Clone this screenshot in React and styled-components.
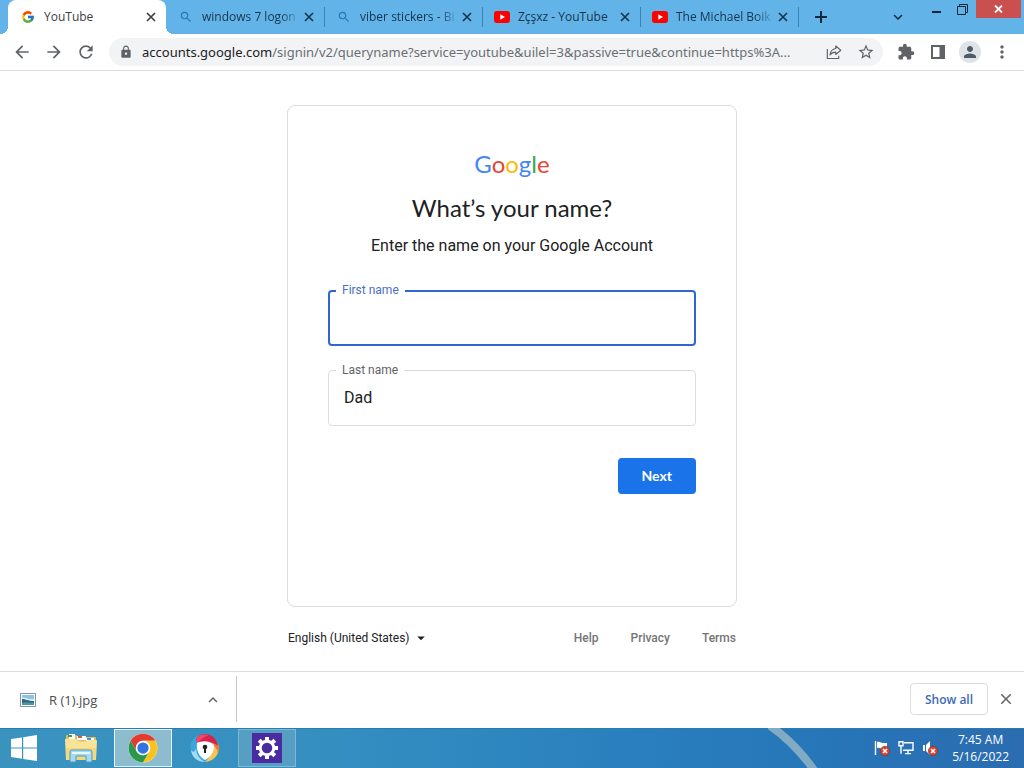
import React from 'react';
import styled, { createGlobalStyle, css } from 'styled-components';
import { FcGoogle } from 'react-icons/fc';
import {
  MdArrowBack,
  MdArrowDropDown,
  MdArrowForward,
  MdClose,
  MdExpandLess,
  MdExpandMore,
  MdExtension,
  MdLock,
  MdMoreVert,
  MdPerson,
  MdRefresh,
  MdSearch,
  MdStarBorder,
} from 'react-icons/md';

const uiFont = '"Segoe UI", "Open Sans", "Noto Sans", sans-serif';
const pageFont = 'Roboto, "Liberation Sans", sans-serif';
const headFont = '"Google Sans", Lato, sans-serif';

const GlobalStyle = createGlobalStyle`
  * {
    box-sizing: border-box;
  }
  body {
    margin: 0;
    background: #fff;
    font-family: ${uiFont};
  }
  button {
    padding: 0;
    border: 0;
    background: none;
    font: inherit;
    color: inherit;
  }
`;

const Desktop = styled.div`
  display: flex;
  flex-direction: column;
  min-height: 100vh;
`;

/* tab strip */
const TabStrip = styled.header`
  display: flex;
  height: 34px;
  padding-left: 8px;
  background: #62b4e8;
  color: #17344d;
`;
const divider = css`
  border-left: 1px solid;
  border-image: linear-gradient(transparent 8px, #3b83b3 8px, #3b83b3 26px, transparent 26px) 1;
`;
const Tab = styled.div`
  position: relative;
  display: flex;
  align-items: center;
  flex: 0 1 158px;
  min-width: 0;
  padding: 0 7px 0 11px;
  ${divider}

  ${({ $active }) => $active && css`
    padding-left: 12px;
    border: 0;
    background: #fff;
    border-radius: 8px 8px 0 0;
    color: #3c4043;

    &::before,
    &::after {
      content: '';
      position: absolute;
      bottom: 0;
      width: 8px;
      height: 8px;
    }
    &::before {
      left: -8px;
      background: radial-gradient(circle at 0 0, transparent 8px, #fff 8px);
    }
    &::after {
      right: -8px;
      background: radial-gradient(circle at 100% 0, transparent 8px, #fff 8px);
    }
    & + div {
      padding-left: 12px;
      border: 0;
    }
  `}
`;
const TabIcon = styled.span`
  display: flex;
  justify-content: center;
  flex: 0 0 16px;
  margin-right: 8px;
`;
const TabTitle = styled.span`
  flex: 1;
  overflow: hidden;
  white-space: nowrap;
  font-size: 12px;
  line-height: 20px;
  ${({ $fade }) => $fade && 'mask-image: linear-gradient(to left, transparent, #000 20px);'}
`;
const TabClose = styled.button`
  display: flex;
  align-items: center;
  justify-content: center;
  flex: 0 0 16px;
  height: 16px;
`;
const NewTab = styled.button`
  display: flex;
  align-items: center;
  justify-content: center;
  width: 44px;
  ${divider}
`;
const WindowButtons = styled.div`
  display: flex;
  align-items: flex-start;
  margin-left: auto;
  padding-right: 3px;
`;
const TabSearch = styled.button`
  display: flex;
  align-items: center;
  justify-content: center;
  width: 32px;
  height: 34px;
  margin-right: 10px;
  color: #12283a;
`;
const WindowButton = styled.button`
  display: flex;
  align-items: center;
  justify-content: center;
  width: ${({ $danger }) => ($danger ? 45 : 26)}px;
  height: 18px;
  padding-right: ${({ $danger }) => ($danger ? 0 : 2)}px;
  background: ${({ $danger }) => ($danger ? '#c9504f' : 'transparent')};
`;

/* toolbar */
const Toolbar = styled.nav`
  display: flex;
  align-items: center;
  height: 37px;
  padding: 0 6px;
  border-bottom: 1px solid #dadce0;
  background: #fff;
`;
const ToolButton = styled.button`
  display: flex;
  align-items: center;
  justify-content: center;
  flex: 0 0 32px;
  height: 28px;
  color: #5f6368;
`;
const Omnibox = styled.div`
  display: flex;
  align-items: center;
  flex: 1;
  min-width: 0;
  height: 28px;
  margin: 0 7px;
  padding: 0 1px 0 10px;
  border-radius: 14px;
  background: #f1f3f4;
  color: #5f6368;
`;
const Address = styled.div`
  flex: 1;
  min-width: 0;
  margin-left: 9px;
  overflow: hidden;
  white-space: nowrap;
  text-overflow: ellipsis;
  font-family: "Noto Sans", sans-serif;
  font-size: 13px;
  line-height: 20px;
  color: #6b6f74;

  b {
    font-weight: 400;
    color: #202124;
  }
`;
const Avatar = styled.span`
  display: flex;
  align-items: center;
  justify-content: center;
  width: 22px;
  height: 22px;
  border-radius: 50%;
  background: #dfe3e8;
  color: #4d5a68;
`;

/* sign in page */
const Page = styled.main`
  display: flex;
  flex-direction: column;
  align-items: center;
  flex: 1;
  padding: 34px 16px 24px;
  font-family: ${pageFont};
  color: #202124;
`;
const Card = styled.form`
  display: flex;
  flex-direction: column;
  align-items: center;
  width: 100%;
  max-width: 450px;
  min-height: 502px;
  padding: 48px 40px;
  border: 1px solid #dadce0;
  border-radius: 8px;
`;
const Wordmark = styled.div`
  margin-bottom: 4px;
  font-family: ${headFont};
  font-size: 24px;
  line-height: 20px;
`;
const Letter = styled.span`
  color: ${({ $color }) => $color};
`;
const Title = styled.h1`
  margin: 14px 0 0;
  font-family: ${headFont};
  font-size: 24px;
  font-weight: 400;
  line-height: 32px;
`;
const Subtitle = styled.p`
  margin: 10px 0 32px;
  font-size: 16px;
  line-height: 24px;
`;
const Field = styled.div`
  position: relative;
  width: 100%;
  margin-bottom: 24px;

  label {
    position: absolute;
    top: -8px;
    left: 8px;
    padding: 0 6px;
    background: #fff;
    font-size: 12px;
    line-height: 16px;
    color: ${({ $active }) => ($active ? '#4a70c4' : '#5f6368')};
  }
  input {
    display: block;
    width: 100%;
    height: 56px;
    padding: 0 15px 2px;
    border: ${({ $active }) => ($active ? '2px solid #2f66cf' : '1px solid #dadce0')};
    border-radius: 4px;
    background: transparent;
    font: 16px ${pageFont};
    color: #202124;
    outline: none;
  }
`;
const NextButton = styled.button`
  align-self: flex-end;
  height: 36px;
  margin-top: 8px;
  padding: 0 24px 2px;
  border-radius: 4px;
  background: #1a73e8;
  color: #fff;
  font-family: ${headFont};
  font-size: 14px;
  font-weight: 700;
`;
const PageFooter = styled.footer`
  display: flex;
  align-items: center;
  justify-content: space-between;
  width: 100%;
  max-width: 448px;
  padding-top: 22px;
  font-size: 12px;
  line-height: 16px;
`;
const Language = styled.div`
  display: flex;
  align-items: center;
  gap: 2px;

  select {
    appearance: none;
    padding: 0;
    border: 0;
    background: none;
    font: inherit;
    color: #202124;
  }
`;
const FooterLinks = styled.div`
  display: flex;
  gap: 32px;

  a {
    color: #757575;
    font-weight: 500;
    text-decoration: none;
  }
`;

/* downloads */
const DownloadBar = styled.section`
  display: flex;
  align-items: center;
  height: 57px;
  padding: 0 8px 2px 0;
  border-top: 1px solid #dadce0;
  background: #fff;
`;
const DownloadItem = styled.div`
  display: flex;
  align-items: center;
  width: 237px;
  height: 46px;
  padding: 2px 13px 0 20px;
  border-right: 1px solid #c4c7cb;
  color: #4a4d51;
  font-size: 13px;
`;
const DownloadName = styled.span`
  flex: 1;
  margin-left: 13px;
`;
const ShowAll = styled.button`
  width: 78px;
  height: 32px;
  margin: 0 8px 0 auto;
  border: 1px solid #dadce0;
  border-radius: 4px;
  color: #3d6ab8;
  font-size: 12px;
  font-weight: 600;
`;
const CloseBar = styled.button`
  display: flex;
  justify-content: center;
  width: 20px;
  color: #5f6368;
`;

/* taskbar */
const Taskbar = styled.footer`
  position: relative;
  display: flex;
  align-items: center;
  gap: 4px;
  height: 40px;
  padding-right: 15px;
  background: linear-gradient(90deg, #3a93bf 0%, #3590c1 30%, #2a80be 60%, #2676b8 80%, #2b6cb0 100%);
  box-shadow: inset 0 1px 0 #2b7cab;
`;
const Streak = styled.svg`
  position: absolute;
  top: 0;
  left: 75%;
`;
const TaskButton = styled.button`
  display: flex;
  align-items: center;
  justify-content: center;
  width: ${({ $start }) => ($start ? 48 : 58)}px;
  height: 38px;
  border: 1px solid transparent;
  ${({ $state }) => $state === 'active' && 'border-color: #e6f2f7; background: #8cbccd;'}
  ${({ $state }) => $state === 'open' && 'border-color: #7fb9d5; background: #569fc3;'}
`;
const SettingsTile = styled.span`
  display: flex;
  align-items: center;
  justify-content: center;
  width: 30px;
  height: 30px;
  background: #4a2ba0;
`;
const Tray = styled.div`
  display: flex;
  align-items: center;
  gap: 8px;
  margin-left: auto;
`;
const Clock = styled.div`
  margin-left: 6px;
  color: #fff;
  font-size: 12px;
  line-height: 17px;
  text-align: center;
`;

const CrossIcon = () => (
  <svg width="10" height="10" viewBox="0 0 10 10" stroke="currentColor" strokeWidth="1.7">
    <path d="M1 1l8 8M9 1l-8 8" />
  </svg>
);

const PlusIcon = () => (
  <svg width="12" height="12" viewBox="0 0 12 12" fill="#12283a">
    <path d="M5 0h2v5h5v2H7v5H5V7H0V5h5z" />
  </svg>
);

const YouTubeIcon = () => (
  <svg width="16" height="12" viewBox="0 0 16 12">
    <rect y="0" width="16" height="12" rx="3" fill="#f00" />
    <path d="M6.3 3.2v5.6L11 6z" fill="#fff" />
  </svg>
);

const ShareIcon = () => (
  <svg width="16" height="16" viewBox="0 0 18 18" fill="none" stroke="#5f6368" strokeWidth="1.3">
    <path d="M1.5 5.5v10.8h12.8v-3" />
    <path d="M11 2.2 16.6 7 11 11.8V9.2c-3 0-5 .9-6.5 3.1.5-4 2.8-6.6 6.5-7.2z" strokeLinejoin="round" />
  </svg>
);

const SidePanelIcon = () => (
  <svg width="14" height="14" viewBox="0 0 14 14">
    <path d="M1 1h12v12H1z" fill="none" stroke="#5f6368" strokeWidth="2" />
    <path d="M8.5 1H13v12H8.5z" fill="#5f6368" />
  </svg>
);

const PictureIcon = () => (
  <svg width="16" height="14" viewBox="0 0 16 14">
    <rect x=".5" y=".5" width="15" height="13" fill="#fff" stroke="#8297a6" />
    <path d="M2 2h12v10H2z" fill="#8cc4e2" />
    <path d="M2 5c4-1 6 2 12 1v2H2z" fill="#e6f2f4" />
    <path d="M2 6c4 0 6 2 12 2v4H2z" fill="#2f6b78" />
    <path d="M2 10c4-1 8 0 12-.5V12H2z" fill="#4f97a8" />
  </svg>
);

const WindowsLogo = () => (
  <svg width="26" height="26" viewBox="0 0 26 26" fill="#fff">
    <path d="M0 4l11-1.6v10.1H0zM12.2 2.2 26 0v12.5H12.2zM0 13.6h11v10.1L0 22zM12.2 13.6H26V26l-13.8-2z" />
  </svg>
);

const ExplorerIcon = () => (
  <svg width="34" height="30" viewBox="0 0 34 30">
    <path d="M2 3q0-1 1-1h9l2 2h17q1 0 1 1v22H2z" fill="#e3bd57" />
    <path d="M5 1h6v5H5z" fill="#fff" />
    <path d="M4 2h4v2H4z" fill="#35a05a" />
    <path d="M13 3h9v4h-9z" fill="#fff" />
    <path d="M14 3h4v2h-4z" fill="#d65a3c" />
    <path d="M22 5h8v3h-8z" fill="#fff" />
    <path d="M23 5h4v2h-4z" fill="#4596d8" />
    <path d="M1 6h11l2 2q5 1 9 0l2-1h7q1 0 1 1l-1 19H2z" fill="#f8e397" />
    <path d="M2 15h30l-.5 12h-29z" fill="#f3d778" />
    <path d="M6 29V19q0-2 2-2h18q2 0 2 2v10h-6v-6H12v6z" fill="#a5daf2" stroke="#4c9dc6" />
    <path d="M8 20h18" stroke="#e8f7fd" strokeWidth="2" />
  </svg>
);

const ChromeLogo = () => (
  <svg width="30" height="30" viewBox="0 0 48 48">
    <circle cx="24" cy="24" r="23" fill="#fff" />
    <path d="M4.1 12.5A23 23 0 0 1 43.9 12.5H24A11.5 11.5 0 0 0 14 29.7z" fill="#e33b2e" />
    <path d="M43.9 12.5A23 23 0 0 1 24 47L34 29.7A11.5 11.5 0 0 0 24 12.5z" fill="#fcc31e" />
    <path d="M24 47A23 23 0 0 1 4.1 12.5L14 29.7A11.5 11.5 0 0 0 34 29.7z" fill="#2a9a48" />
    <circle cx="24" cy="24" r="11.5" fill="#fff" />
    <circle cx="24" cy="24" r="9" fill="#2f74e0" />
  </svg>
);

const SecureBrowserIcon = () => (
  <svg width="30" height="30" viewBox="0 0 30 30">
    <path d="M9 2C2 5-1 12 1 18c2 7 8 11 14 11l3-2L8 9z" fill="#3aa6e0" />
    <path d="M1 17c1 8 7 12 14 12C9 26 6 21 6 15c-1 4-3 5-5 2z" fill="#a4dcf2" />
    <path d="M23 9c6 0 6 5 6 7-1 8-8 13-14 13 5-4 8-11 8-20z" fill="#f6c558" />
    <path d="M25 8c4 3 5 7 3 12-1-4-3-7-6-9z" fill="#ef7a3c" />
    <path d="M7 4C14-2 26 1 28 13 24 9 16 8 8 11 6 9 6 6 7 4z" fill="#d9234a" />
    <path d="M7 4c4-3 8-3 12-2-5 2-9 4-11 9C6 9 6 6 7 4z" fill="#ee4a68" />
    <path d="M7 10c4-2 12-3 17 2 0 7-3 12-9 15-6-3-9-10-8-17z" fill="#fff" />
    <circle cx="15" cy="14" r="2.3" fill="#222" />
    <path d="M14 14h2v6h-2z" fill="#222" />
  </svg>
);

const GearIcon = () => (
  <svg width="24" height="24" viewBox="-12 -12 24 24" fill="#fff">
    {[0, 45, 90, 135, 180, 225, 270, 315].map(angle => (
      <rect key={angle} x="-2" y="-11" width="4" height="5" transform={`rotate(${angle})`} />
    ))}
    <circle r="6.8" fill="none" stroke="#fff" strokeWidth="3" />
  </svg>
);

const ErrorBadge = () => (
  <g>
    <circle cx="11" cy="11" r="4.7" fill="#d9432f" stroke="#8e2a24" strokeWidth=".6" />
    <path d="M9 9l4 4M13 9l-4 4" stroke="#fff" strokeWidth="1.6" />
  </g>
);

const FlagIcon = () => (
  <svg width="16" height="16" viewBox="0 0 16 16">
    <path d="M1.5 1v14" stroke="#fff" strokeWidth="1.4" />
    <path d="M3 2c3-1 4 1 6 1h4v6H9C7 9 6 7 3 8z" fill="#fff" />
    <ErrorBadge />
  </svg>
);

const NetworkIcon = () => (
  <svg width="16" height="16" viewBox="0 0 16 16" fill="none" stroke="#fff" strokeWidth="1.4">
    <path d="M6 2.7h9v7.6H5M10 10.3v3M7 13.6h6" />
    <path d="M1 1.7h4v4H1zM3 5.7v8" />
  </svg>
);

const SpeakerIcon = () => (
  <svg width="16" height="16" viewBox="0 0 16 16">
    <path d="M1 5h2v6H1zM4 5l4-4v14l-4-4z" fill="#fff" />
    <ErrorBadge />
  </svg>
);

const tabs = [
  { title: 'YouTube', icon: <FcGoogle size={14} />, active: true },
  { title: 'windows 7 logon', icon: <MdSearch size={14} color="#2579b5" />, fade: true },
  { title: 'viber stickers - Bi', icon: <MdSearch size={14} color="#2579b5" />, fade: true },
  { title: 'Zçşxz - YouTube', icon: <YouTubeIcon /> },
  { title: 'The Michael Boik', icon: <YouTubeIcon />, fade: true },
];

const wordmark = [
  ['G', '#4285f4'],
  ['o', '#ea4335'],
  ['o', '#fbbc05'],
  ['g', '#4285f4'],
  ['l', '#34a853'],
  ['e', '#ea4335'],
];

const BrowserTabs = () => (
  <TabStrip>
    {tabs.map(tab => (
      <Tab key={tab.title} $active={tab.active}>
        <TabIcon>{tab.icon}</TabIcon>
        <TabTitle $fade={tab.fade}>{tab.title}</TabTitle>
        <TabClose aria-label={`Close ${tab.title}`}><CrossIcon /></TabClose>
      </Tab>
    ))}
    <NewTab aria-label="New tab"><PlusIcon /></NewTab>
    <WindowButtons>
      <TabSearch aria-label="Search tabs"><MdExpandMore size={18} /></TabSearch>
      <WindowButton aria-label="Minimize">
        <svg width="9" height="14" viewBox="0 0 9 14"><path d="M0 9h9v2H0z" fill="#12283a" /></svg>
      </WindowButton>
      <WindowButton aria-label="Restore">
        <svg width="11" height="11" viewBox="0 0 11 11" fill="none" stroke="#12283a">
          <path d="M.5 2.5h8v8h-8zM2.5 2.5v-2h8v8h-2" />
        </svg>
      </WindowButton>
      <WindowButton $danger aria-label="Close window">
        <svg width="9" height="8" viewBox="0 0 9 8">
          <path d="M1 .5l7 7M8 .5l-7 7" stroke="#fff" strokeWidth="1.8" />
        </svg>
      </WindowButton>
    </WindowButtons>
  </TabStrip>
);

const NavigationBar = () => (
  <Toolbar>
    <ToolButton aria-label="Back"><MdArrowBack size={20} /></ToolButton>
    <ToolButton aria-label="Forward"><MdArrowForward size={20} /></ToolButton>
    <ToolButton aria-label="Reload"><MdRefresh size={20} /></ToolButton>
    <Omnibox>
      <MdLock size={14} />
      <Address>
        <b>accounts.google.com</b>/signin/v2/queryname?service=youtube&amp;uilel=3&amp;passive=true&amp;continue=https%3A...
      </Address>
      <ToolButton aria-label="Share"><ShareIcon /></ToolButton>
      <ToolButton aria-label="Bookmark"><MdStarBorder size={18} /></ToolButton>
    </Omnibox>
    <ToolButton aria-label="Extensions"><MdExtension size={18} /></ToolButton>
    <ToolButton aria-label="Side panel"><SidePanelIcon /></ToolButton>
    <ToolButton aria-label="Profile"><Avatar><MdPerson size={18} /></Avatar></ToolButton>
    <ToolButton aria-label="Menu"><MdMoreVert size={20} /></ToolButton>
  </Toolbar>
);

const SignIn = () => (
  <Page>
    <Card>
      <Wordmark>
        {wordmark.map(([letter, color], i) => (
          <Letter key={`${letter}${i}`} $color={color}>{letter}</Letter>
        ))}
      </Wordmark>
      <Title>What’s your name?</Title>
      <Subtitle>Enter the name on your Google Account</Subtitle>
      <Field $active>
        <input id="firstName" type="text" />
        <label htmlFor="firstName">First name</label>
      </Field>
      <Field>
        <input id="lastName" type="text" defaultValue="Dad" />
        <label htmlFor="lastName">Last name</label>
      </Field>
      <NextButton type="button">Next</NextButton>
    </Card>
    <PageFooter>
      <Language>
        <select aria-label="Language">
          <option>English (United States)</option>
        </select>
        <MdArrowDropDown size={18} />
      </Language>
      <FooterLinks>
        <a href="#help">Help</a>
        <a href="#privacy">Privacy</a>
        <a href="#terms">Terms</a>
      </FooterLinks>
    </PageFooter>
  </Page>
);

const Downloads = () => (
  <DownloadBar>
    <DownloadItem>
      <PictureIcon />
      <DownloadName>R (1).jpg</DownloadName>
      <CloseBar aria-label="Download options"><MdExpandLess size={18} /></CloseBar>
    </DownloadItem>
    <ShowAll>Show all</ShowAll>
    <CloseBar aria-label="Close downloads"><MdClose size={18} /></CloseBar>
  </DownloadBar>
);

const App = () => (
  <Desktop>
    <GlobalStyle />
    <BrowserTabs />
    <NavigationBar />
    <SignIn />
    <Downloads />
    <Taskbar>
      <Streak width="60" height="40" viewBox="0 0 60 40">
        <path d="M1 -3Q26 14 46 42" fill="none" stroke="#82aac2" strokeWidth="8" />
      </Streak>
      <TaskButton $start aria-label="Start"><WindowsLogo /></TaskButton>
      <TaskButton aria-label="File Explorer"><ExplorerIcon /></TaskButton>
      <TaskButton $state="active" aria-label="Chrome"><ChromeLogo /></TaskButton>
      <TaskButton aria-label="Secure browser"><SecureBrowserIcon /></TaskButton>
      <TaskButton $state="open" aria-label="Settings">
        <SettingsTile><GearIcon /></SettingsTile>
      </TaskButton>
      <Tray>
        <FlagIcon />
        <NetworkIcon />
        <SpeakerIcon />
        <Clock>
          <div>7:45 AM</div>
          <div>5/16/2022</div>
        </Clock>
      </Tray>
    </Taskbar>
  </Desktop>
);

export default App;
